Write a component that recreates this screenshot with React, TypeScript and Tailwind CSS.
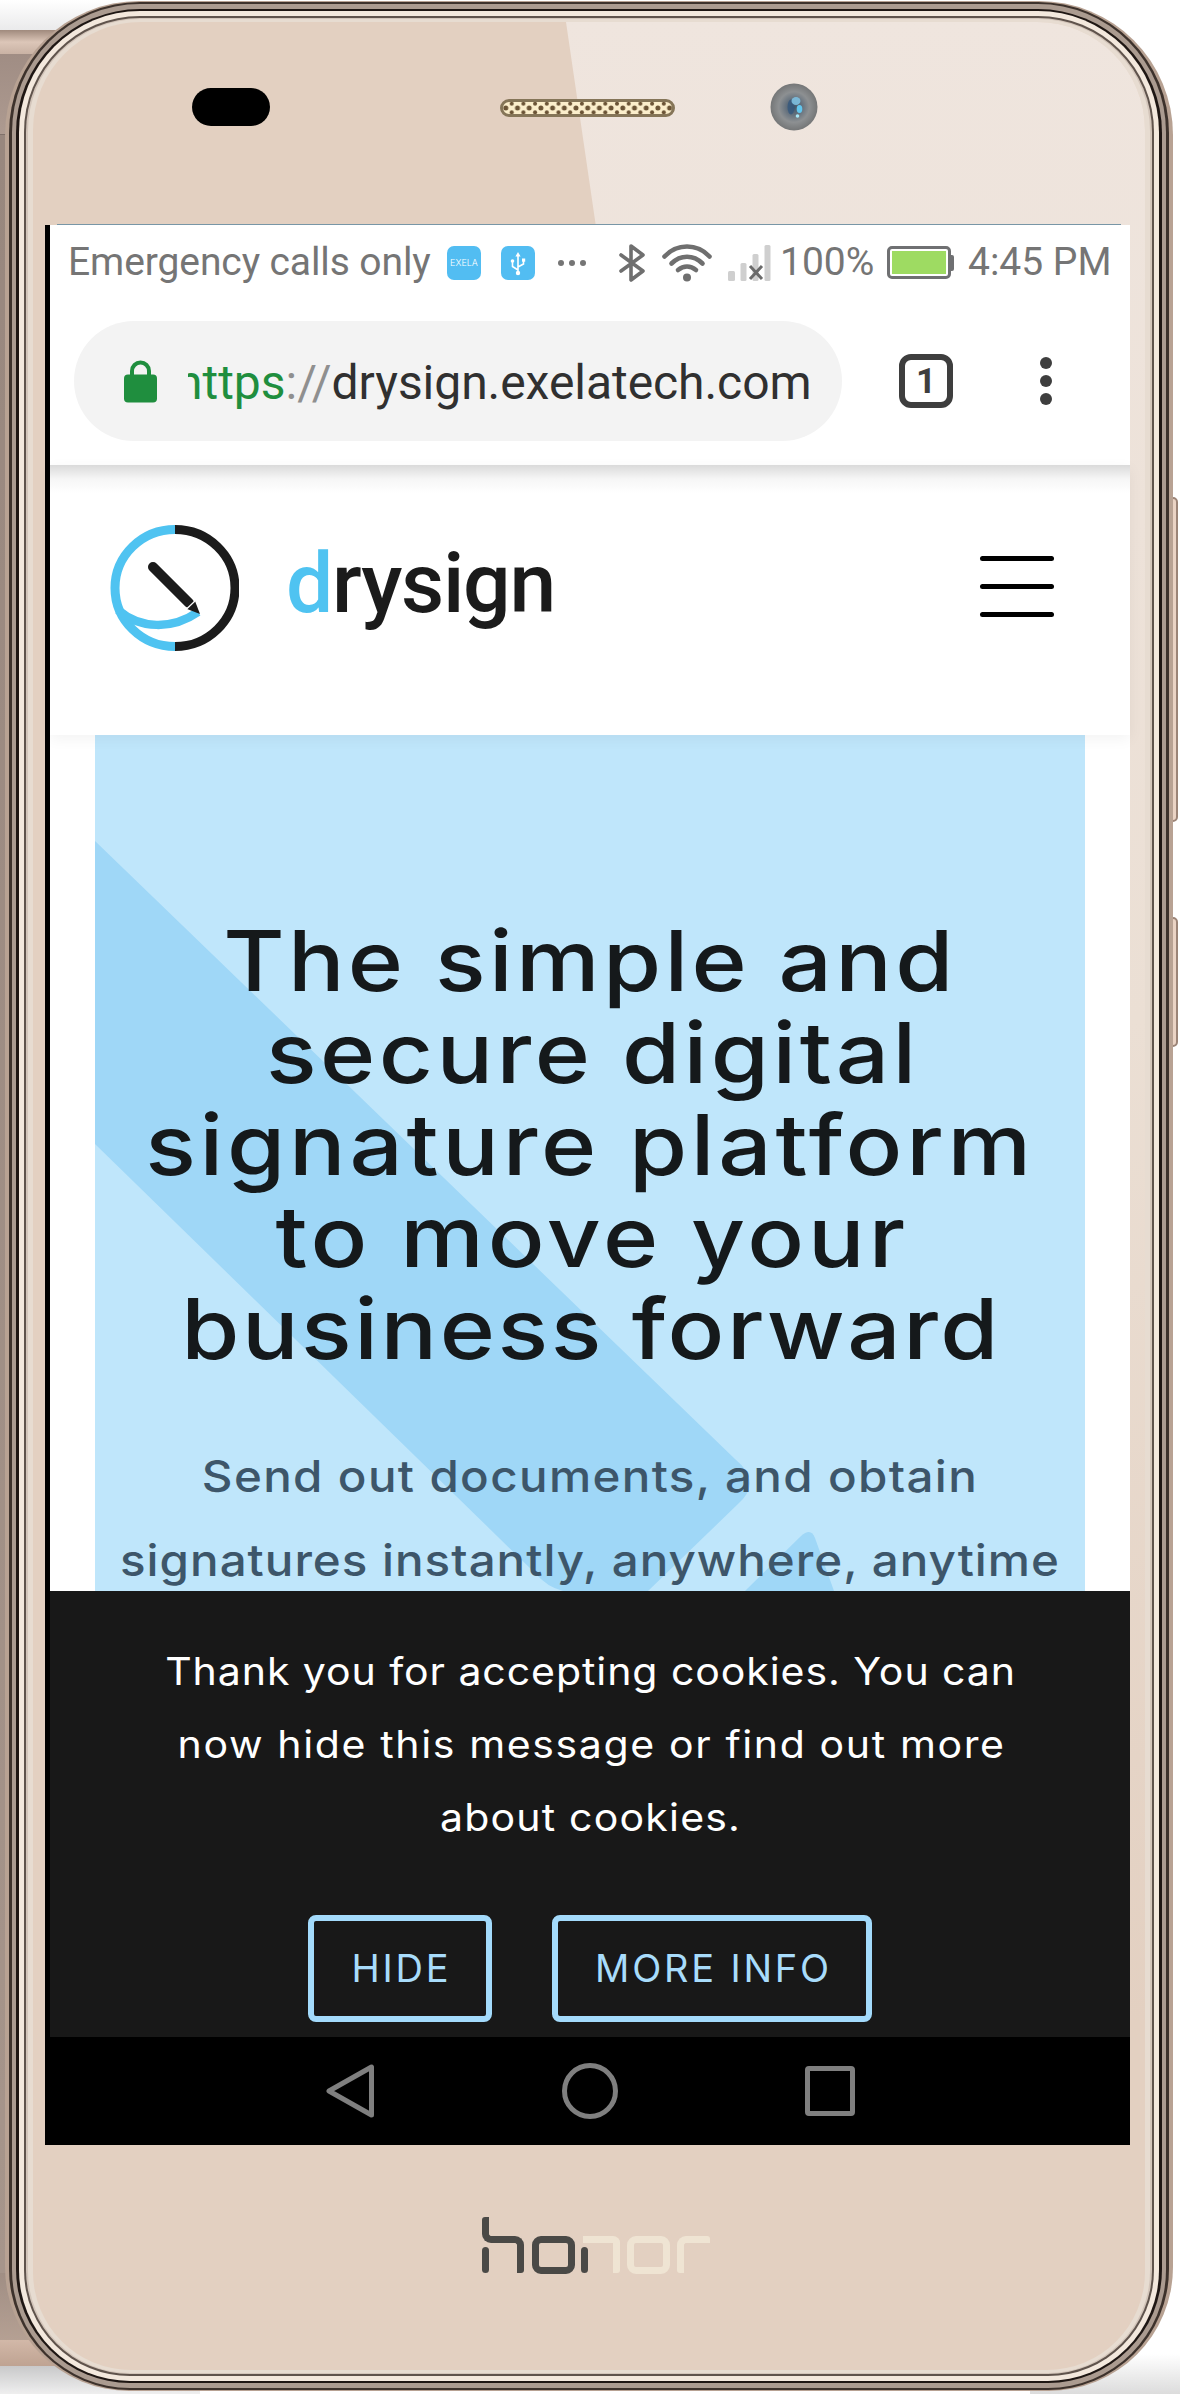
import type { ReactNode } from 'react';

const bezelRings = [
  'rounded-t-[134px] rounded-b-[124px] bg-[#b8a293] px-[4px] py-[1px]',
  'rounded-t-[131px] rounded-b-[121px] bg-[#3d322c] px-[3px] py-[2px]',
  'rounded-t-[128px] rounded-b-[118px] bg-[#ab9b90] px-[4px] py-[5px]',
  'rounded-t-[124px] rounded-b-[114px] bg-[#1e1613] px-[3px] py-[2px]',
  'rounded-t-[121px] rounded-b-[111px] bg-[#f3e8dd] px-[5px] py-[5px]',
  'rounded-t-[116px] rounded-b-[106px] bg-[#5f534c] px-[2px] py-[2px]',
  'rounded-t-[114px] rounded-b-[104px] bg-[#d3c5ba] px-[2px] py-[1px]',
  'rounded-t-[112px] rounded-b-[102px] bg-[#e7dcd1] px-[5px] py-[3px]',
];

function Bezel({ children }: { children: ReactNode }) {
  return (
    <>
      {bezelRings.reduceRight<ReactNode>(
        (inner, ring) => (
          <div className={`h-full w-full ${ring}`}>{inner}</div>
        ),
        children,
      )}
    </>
  );
}

function RearDevice() {
  return (
    <>
      <div className="absolute left-0 top-0 h-[32px] w-[160px] bg-gradient-to-b from-white to-[#e9e9ea]" />
      <div className="absolute left-0 top-[30px] h-[2336px] w-[60px] bg-[#9c8b82]">
        <div className="h-[24px] bg-gradient-to-b from-[#a08a7d] via-[#dcc6b8] to-[#c9b2a4]" />
        <div className="h-[80px] bg-gradient-to-b from-[#a08d84] to-[#ad9a90]" />
        <div className="h-[1px] bg-[#80716a]" />
        <div className="h-[2138px] bg-gradient-to-b from-[#98877e] to-[#a6958b]" />
        <div className="h-[67px] bg-gradient-to-b from-[#a08e84] to-[#b5a093]" />
        <div className="h-[26px] bg-gradient-to-b from-[#d2b8a8] to-[#bfa392]" />
      </div>
      <div className="absolute bottom-0 left-0 h-[28px] w-[200px] bg-gradient-to-b from-[#c9c9ca] to-[#efefef]" />
      <div className="absolute bottom-0 right-0 h-[40px] w-[150px] bg-gradient-to-b from-white to-[#dcdcdc]" />
    </>
  );
}

function SideKeys() {
  return (
    <>
      <div className="absolute left-[1168px] top-[497px] h-[325px] w-[10px] rounded-r-[5px] border-2 border-[#9b8477] bg-[#ead3c4]" />
      <div className="absolute left-[1168px] top-[917px] h-[130px] w-[10px] rounded-r-[5px] border-2 border-[#9b8477] bg-[#ead3c4]" />
    </>
  );
}

function Speaker() {
  return (
    <svg width="175" height="18" viewBox="0 0 175 18">
      <defs>
        <pattern id="mesh" width="11.7" height="12" patternUnits="userSpaceOnUse" x="0" y="3">
          <rect width="11.7" height="12" fill="#fbeecb" />
          <circle cx="5.8" cy="6" r="2.5" fill="#6b5436" />
          <circle cx="0" cy="1.8" r="2" fill="#6b5436" />
          <circle cx="11.7" cy="1.8" r="2" fill="#6b5436" />
          <circle cx="0" cy="10.2" r="2" fill="#6b5436" />
          <circle cx="11.7" cy="10.2" r="2" fill="#6b5436" />
        </pattern>
      </defs>
      <rect x="1.5" y="1.5" width="172" height="15" rx="7.5" fill="url(#mesh)" stroke="#857558" strokeWidth="3" />
    </svg>
  );
}

function Camera() {
  return (
    <svg width="48" height="48" viewBox="0 0 48 48">
      <defs>
        <radialGradient id="lens">
          <stop offset="0" stopColor="#3f566c" />
          <stop offset="0.35" stopColor="#66727e" />
          <stop offset="0.65" stopColor="#8d9092" />
          <stop offset="1" stopColor="#747677" />
        </radialGradient>
      </defs>
      <circle cx="24" cy="24" r="23.5" fill="url(#lens)" />
      <ellipse cx="21" cy="24" rx="3.5" ry="7.5" fill="#34587d" opacity="0.8" />
      <ellipse cx="26" cy="18" rx="4.5" ry="4" fill="#7dbfe0" opacity="0.9" />
      <ellipse cx="29.500" cy="26" rx="2.800" ry="4" fill="#62c6ee" />
      <circle cx="27.5" cy="33" r="1.800" fill="#a8e8f8" />
    </svg>
  );
}

function StatusBar() {
  return (
    <div className="flex h-[75px] items-center pl-[18px] font-['Roboto',sans-serif] text-[39px] leading-none text-[#757575]">
      <span className="w-[365px] whitespace-nowrap tracking-[-0.1px]">Emergency calls only</span>
      <span className="ml-[14px] flex h-[34px] w-[34px] items-center justify-center rounded-[7px] bg-[#52bdf2] font-['Inter',sans-serif] text-[9px] font-light text-white">
        EXELA
      </span>
      <svg className="ml-[20px]" width="34" height="34" viewBox="0 0 34 34">
        <rect width="34" height="34" rx="7" fill="#52bdf2" />
        <g fill="none" stroke="#fff" strokeWidth="1.6">
          <path d="M17 9v18M17 24l-5.5-3.5V15M17 21l5.500-3V14" />
        </g>
        <path d="M17 6l2.600 4.500h-5.200z" fill="#fff" />
        <circle cx="17" cy="27" r="2.200" fill="#fff" />
        <circle cx="11.500" cy="15" r="1.800" fill="#fff" />
        <rect x="21" y="12.500" width="3.200" height="3.200" fill="#fff" />
      </svg>
      <span className="ml-[23px] flex gap-[5px]">
        <i className="h-[6px] w-[6px] rounded-full bg-[#757575]" />
        <i className="h-[6px] w-[6px] rounded-full bg-[#757575]" />
        <i className="h-[6px] w-[6px] rounded-full bg-[#757575]" />
      </span>
      <svg className="ml-[33px]" width="27" height="38" viewBox="0 0 27 38" fill="none" stroke="#6f6f6f" strokeWidth="3.600" strokeLinejoin="round" strokeLinecap="round">
        <path d="M2 11l22 16-12 9V2l12 9L2 27" />
      </svg>
      <svg className="ml-[16px]" width="50" height="38" viewBox="0 0 50 38" fill="none" stroke="#6f6f6f" strokeWidth="4.600" strokeLinecap="round">
        <path d="M2.500 12.500C15 -.8 35 -.8 47.500 12.500" />
        <path d="M9.500 19.500C18.500 10.500 31.500 10.500 40.500 19.500" />
        <path d="M16 26C21.500 21.500 28.500 21.500 34 26" />
        <circle cx="25" cy="33.500" r="4" fill="#6f6f6f" stroke="none" />
      </svg>
      <svg className="ml-[16px]" width="43" height="36" viewBox="0 0 43 36">
        <g fill="#cfcfcf">
          <rect y="26" width="7" height="10" rx="1.500" />
          <rect x="12.500" y="18" width="6" height="18" rx="1.500" />
          <rect x="24.500" y="9" width="6" height="27" rx="1.500" />
          <rect x="36.500" width="6" height="36" rx="1.500" />
        </g>
        <path d="M22 21l12 13M34 21l-12 13" stroke="#6a6a6a" strokeWidth="3" fill="none" />
      </svg>
      <span className="ml-[9px] w-[95px]">100%</span>
      <span className="ml-[12px] flex items-center">
        <span className="h-[33px] w-[64px] rounded-[5px] border-[3px] border-[#6f7072] p-[2px]">
          <span className="block h-full w-full bg-[#9edb62]" />
        </span>
        <span className="h-[16px] w-[3px] rounded-r-[2px] bg-[#6f7072]" />
      </span>
      <span className="ml-[14px] whitespace-nowrap">4:45 PM</span>
    </div>
  );
}

function AddressBar() {
  return (
    <div className="flex h-[165px] items-center pb-[3px] pl-[24px] font-['Roboto',sans-serif]">
      <div className="flex h-[120px] w-[768px] items-center rounded-full bg-[#f3f3f3] pl-[50px]">
        <svg width="33" height="43" viewBox="0 0 33 43">
          <path d="M8 18V11a8.500 8.500 0 0 1 17 0v7" fill="none" stroke="#1f8e3e" strokeWidth="4" />
          <rect y="14.500" width="33" height="28" rx="4" fill="#1f8e3e" />
        </svg>
        <div className="ml-[31px] overflow-hidden pt-[3px]">
          <p className="-ml-[12px] whitespace-nowrap text-[48px] leading-[60px] text-[#303030]">
            <span className="text-[#1f8e3e]">https</span>
            <span className="text-[#8f8f8f]">://</span>
            <span className="tracking-[-0.05px]">drysign.exelatech.com</span>
          </p>
        </div>
      </div>
      <div className="ml-[57px] flex h-[54px] w-[54px] items-center justify-center rounded-[12px] border-[6px] border-[#3e3e3e] text-[35px] font-bold leading-none text-[#3e3e3e]">
        1
      </div>
      <div className="ml-[87px] flex flex-col gap-[6px]">
        <i className="h-[12px] w-[12px] rounded-full bg-[#3e3e3e]" />
        <i className="h-[12px] w-[12px] rounded-full bg-[#3e3e3e]" />
        <i className="h-[12px] w-[12px] rounded-full bg-[#3e3e3e]" />
      </div>
    </div>
  );
}

function SiteHeader() {
  return (
    <header className="relative z-10 flex h-[270px] items-start bg-white pl-[60px] pt-[60px] shadow-[0_4px_14px_rgba(0,0,0,0.05)]">
      <div className="absolute inset-x-0 top-0 h-[28px] bg-gradient-to-b from-[#dadada] via-[#f6f6f6] to-white" />
      <svg width="129" height="126" viewBox="0 0 129 126" fill="none">
        <path d="M65 4.500A60 58.500 0 0 0 65 121.500" stroke="#4fc3f1" strokeWidth="9" />
        <path d="M65 4.500A60 58.500 0 0 1 65 121.500" stroke="#1b1b1b" strokeWidth="9" />
        <path d="M8 85C30 104 62 105 88 87" stroke="#4fc3f1" strokeWidth="8.500" />
        <path d="M43 42L79 78" stroke="#1b1b1b" strokeWidth="10" strokeLinecap="round" />
        <path d="M85 76l5 13-13-5z" fill="#1b1b1b" />
        <path d="M75.500 85L85.500 75.500" stroke="#fff" strokeWidth="1.200" />
      </svg>
      <p className="ml-[47px] mt-[12px] font-['Roboto',sans-serif] text-[84px] font-medium leading-[94px] tracking-[-1.3px] text-[#1b1b1b]">
        <span className="text-[#4fc3f1]">d</span>rysign
      </p>
      <div className="ml-auto mr-[76px] mt-[31px] flex w-[74px] flex-col gap-[23px]">
        <span className="h-[5px] rounded-full bg-black" />
        <span className="h-[5px] rounded-full bg-black" />
        <span className="h-[5px] rounded-full bg-black" />
      </div>
    </header>
  );
}

function Hero() {
  return (
    <section className="relative ml-[45px] h-[856px] w-[990px] overflow-hidden bg-[#bfe6fb] pt-[180px]">
      <svg className="absolute left-0 top-0" width="990" height="856" viewBox="0 0 990 856" fill="#9fd7f7">
        <path d="M0 106L640 724Q668 747 643 769L553 856H468Q452 852 440 838L0 409Z" />
        <path d="M650 856L706 801Q716 792 720 803L739 856Z" />
      </svg>
      <h1 className="relative scale-x-112 whitespace-nowrap text-center text-[84px] font-medium leading-[92px] text-[#15191b]">
        <span className="block tracking-[3px]">The simple and</span>
        <span className="block pl-[5px] tracking-[3.100px]">secure digital</span>
        <span className="block tracking-[3.350px]">signature platform</span>
        <span className="block pl-[4px] tracking-[3.500px]">to move your</span>
        <span className="block pl-[2px] tracking-[2.300px]">business forward</span>
      </h1>
      <p className="relative mt-[59px] scale-x-108 whitespace-nowrap text-center text-[44px] font-medium leading-[84px] text-[#3d566a]">
        <span className="block tracking-[1.250px]">Send out documents, and obtain</span>
        <span className="block tracking-[0.930px]">signatures instantly, anywhere, anytime</span>
      </p>
    </section>
  );
}

function CookieBanner() {
  return (
    <section className="h-[446px] bg-[#181818] pt-[44px] text-[38px]">
      <p className="scale-x-108 whitespace-nowrap pl-[1px] text-center leading-[73px] text-white">
        <span className="block tracking-[0.850px]">Thank you for accepting cookies. You can</span>
        <span className="block pl-[2px] tracking-[1.500px]">now hide this message or find out more</span>
        <span className="block tracking-[1.100px]">about cookies.</span>
      </p>
      <div className="mt-[61px] flex justify-center gap-[60px] tracking-[2.800px] text-[#a8dcfb]">
        <button className="h-[107px] w-[184px] rounded-[8px] border-[6px] border-[#a3dafb] pl-[3px]">HIDE</button>
        <button className="h-[107px] w-[320px] rounded-[8px] border-[6px] border-[#a3dafb] pl-[3px]">MORE INFO</button>
      </div>
    </section>
  );
}

function NavBar() {
  return (
    <nav className="flex h-[108px] items-center bg-black pl-[276px]">
      <svg width="48" height="54" viewBox="0 0 48 54">
        <path d="M3 27L45.500 3v48z" fill="none" stroke="#7f7f7f" strokeWidth="5" strokeLinejoin="round" />
      </svg>
      <span className="ml-[188px] h-[56px] w-[56px] rounded-full border-[5px] border-[#7f7f7f]" />
      <span className="ml-[187px] h-[50px] w-[50px] rounded-[4px] border-[5px] border-[#7f7f7f]" />
    </nav>
  );
}

function HonorLogo() {
  return (
    <div className="flex h-[57px]" role="img" aria-label="honor">
      <div className="relative w-[42px]">
        <i className="absolute left-0 top-0 h-[26px] w-[14px] rounded-bl-[9px] rounded-tl-[3px] border-b-[7px] border-l-[7px] border-[#4a4946]" />
        <i className="absolute left-[12px] top-[19px] h-[37px] w-[30px] rounded-br-[3px] rounded-tr-[9px] border-r-[7px] border-t-[7px] border-[#4a4946]" />
        <i className="absolute left-0 top-[30px] h-[26px] w-[7px] rounded-full bg-[#4a4946]" />
      </div>
      <i className="ml-[8px] mt-[19px] h-[38px] w-[43px] rounded-[9px] border-[7px] border-[#4a4946]" />
      <div className="relative ml-[6px] w-[39px]">
        <i className="absolute left-[2px] top-[19px] h-[37px] w-[37px] rounded-br-[3px] rounded-tr-[7px] border-r-[7px] border-t-[7px] border-[#efe4d3]" />
        <i className="absolute -left-[2px] top-[28px] h-[30px] w-[11px] rounded-full border-2 border-[#e3d0c1] bg-[#4a4946]" />
      </div>
      <i className="ml-[7px] mt-[19px] h-[38px] w-[43px] rounded-[9px] border-[7px] border-[#efe4d3]" />
      <i className="ml-[7px] mt-[19px] h-[37px] w-[33px] rounded-bl-[3px] rounded-tl-[9px] rounded-tr-[3px] border-l-[7px] border-t-[7px] border-[#efe4d3]" />
    </div>
  );
}

export default function App() {
  return (
    <div className="relative h-[2394px] w-[1180px] overflow-hidden bg-white pl-[5px] pt-px font-['Inter',sans-serif]">
      <RearDevice />
      <SideKeys />
      <div className="relative h-[2390px] w-[1168px]">
        <Bezel>
          <div className="relative flex h-full flex-col overflow-hidden rounded-b-[98px] rounded-t-[108px] bg-[#e3d0c1]">
            <div className="absolute inset-x-0 top-0 h-[2000px] bg-gradient-to-b from-[#efe5de] via-[#ebdfd4] to-[#e3d0c1] [clip-path:polygon(533px_0,100%_0,100%_100%,826px_100%)]" />
            <div className="relative h-[203px]">
              <div className="flex h-[170px] items-center pl-[159px]">
                <span className="h-[38px] w-[78px] rounded-full bg-black" />
                <span className="ml-[230px] mt-[2px]">
                  <Speaker />
                </span>
                <span className="ml-[95px]">
                  <Camera />
                </span>
              </div>
              <div className="absolute bottom-0 left-[24px] right-[24px] h-px bg-[#7896a6]" />
            </div>
            <div className="relative ml-[12px] h-[1920px] w-[1085px] border-l-[5px] border-black bg-white">
              <StatusBar />
              <AddressBar />
              <SiteHeader />
              <Hero />
              <CookieBanner />
              <NavBar />
            </div>
            <div className="relative pl-[449px] pt-[72px]">
              <HonorLogo />
            </div>
          </div>
        </Bezel>
      </div>
    </div>
  );
}
